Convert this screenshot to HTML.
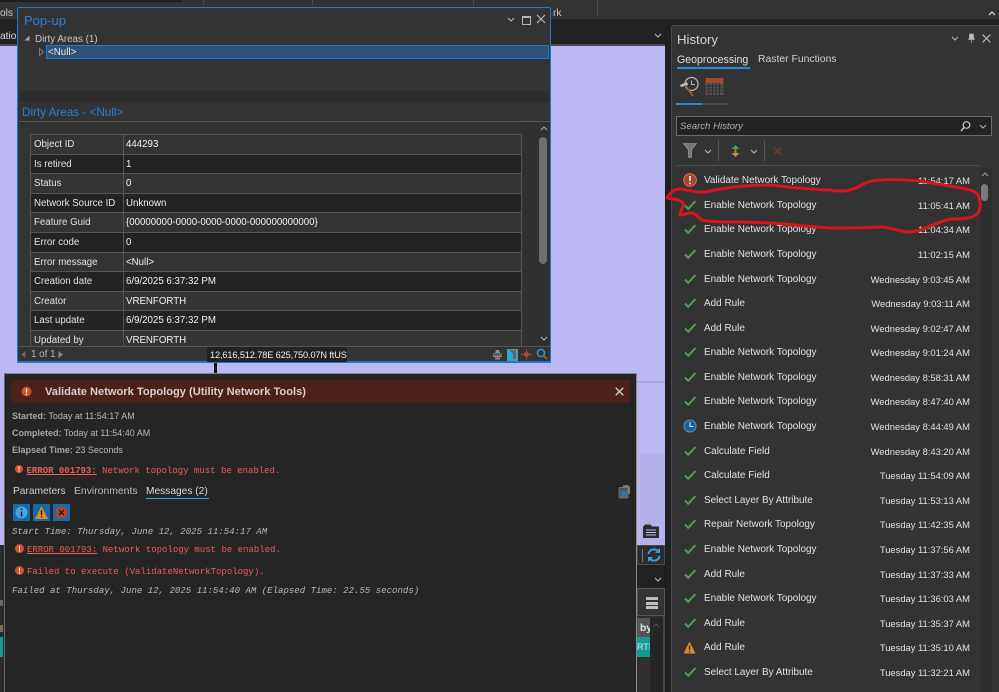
<!DOCTYPE html>
<html><head><meta charset="utf-8"><style>
html,body{margin:0;padding:0;background:#262626}
#p{position:relative;width:999px;height:692px;overflow:hidden;background:#252525;font-family:"Liberation Sans",sans-serif;color:#ddd}
.a{position:absolute}
.t{position:absolute;white-space:nowrap;font-size:10.2px;line-height:12px;color:#dcdcdc}
.n{margin-top:1px;font-size:9.95px;color:#e2e2e2}
.m{font-family:"Liberation Mono",monospace;font-size:9px;color:#ea5f56;margin-top:1px}
.i{font-family:"Liberation Mono",monospace;font-size:9.05px;font-style:italic;color:#b8b8b8;margin-top:1px}
.c{position:absolute;left:0;width:492px;height:19.6px;box-sizing:border-box;border-bottom:1px solid #555;font-size:9.7px;line-height:20px;color:#e2e2e2;white-space:nowrap}
.c span{position:absolute;left:3px}.c b{position:absolute;left:95px;font-weight:normal;color:#f2f2f2}
.c i{position:absolute;left:92px;top:0;bottom:0;width:1px;background:#555}
.o{background:#343434}.e{background:#232323}
.s{position:absolute;color:#b9b9b9;font-size:9px;line-height:11px;white-space:nowrap}
.s b{color:#a5a5a5}
.r{position:absolute;right:29px;margin-top:.5px;white-space:nowrap;font-size:9.4px;line-height:12px;color:#e2e2e2}
.k{margin-top:-.5px}
svg{position:absolute;overflow:visible}
</style></head><body><div id="p">
<svg width="0" height="0"><defs>
<symbol id="ok" viewBox="0 0 14 12"><path d="M2 6.500L5.200 9.800L12.500 2" fill="none" stroke="#4f9e4f" stroke-width="2"/></symbol>
<symbol id="ch" viewBox="0 0 8 5"><path d="M1 1L4 4L7 1" fill="none" stroke="#b5b5b5" stroke-width="1.100"/></symbol>
</defs></svg>

<!-- top strip -->
<div class="a" style="left:0;top:0;width:999px;height:19px;background:#333"></div>
<div class="a" style="left:0;top:0;width:183px;height:2px;background:#1d1d1d"></div>
<div class="a" style="left:203px;top:0;width:1px;height:5px;background:#4c4c4c"></div>
<div class="a" style="left:312px;top:0;width:1px;height:5px;background:#4c4c4c"></div>
<div class="a" style="left:473px;top:0;width:1px;height:6px;background:#4c4c4c"></div>
<div class="a" style="left:597px;top:0;width:1px;height:16px;background:#4c4c4c"></div>
<div class="a" style="left:0;top:19px;width:999px;height:25px;background:#232323"></div>
<div class="a" style="left:0;top:44px;width:665px;height:2px;background:#4a4a4a"></div>
<div class="t" style="left:0;top:8px;color:#c8c8c8">ols</div>
<div class="t" style="left:0;top:31px;color:#d8d8d8">atio</div>
<div class="t" style="left:553px;top:8px;color:#c8c8c8">rk</div>
<svg style="left:654px;top:33px" width="8" height="5"><use href="#ch"/></svg>
<svg style="left:988px;top:11px" width="8" height="5"><path d="M1 4L4 1L7 4" fill="none" stroke="#e0e0e0" stroke-width="1.200"/></svg>

<!-- map -->
<div class="a" style="left:0;top:46px;width:665px;height:499px;background:#bcb8f4"></div>
<div class="a" style="left:640px;top:453px;width:25px;height:92px;background:#b4b0ea"></div>
<div class="a" style="left:637px;top:381px;width:28px;height:2px;background:#a9a6d6"></div>
<div class="a" style="left:214px;top:363px;width:3px;height:10px;background:#111"></div>
<div class="a" style="left:0;top:545px;width:4px;height:147px;background:#2a2a2a"></div>
<div class="a" style="left:0;top:600px;width:3px;height:6px;background:#5a6a78"></div>
<div class="a" style="left:0;top:625px;width:3px;height:7px;background:#7a6a58"></div>
<div class="a" style="left:0;top:637px;width:3px;height:20px;background:#129b97"></div>

<!-- lower right of map -->
<div class="a" style="left:637px;top:545px;width:28px;height:147px;background:#222"></div>
<div class="a" style="left:637px;top:545px;width:28px;height:20px;background:#2c2c2c;border:1px solid #4c4c4c;box-sizing:border-box"></div>
<div class="a" style="left:642px;top:549px;width:1px;height:13px;background:#777"></div>
<svg style="left:647px;top:547px" width="14" height="16" viewBox="0 0 14 16"><path d="M1.500 7A5.500 5 0 0 1 11 4M12.500 9A5.500 5 0 0 1 3 12" fill="none" stroke="#38a0ea" stroke-width="2"/><path d="M13 1v5h-5zM1 15v-5h5z" fill="#38a0ea"/></svg>
<svg style="left:654px;top:577px" width="8" height="5"><use href="#ch"/></svg>
<div class="a" style="left:637px;top:588px;width:28px;height:104px;background:#2f2f2f;border-right:2px solid #454545;box-sizing:border-box"></div>
<div class="a" style="left:637px;top:588px;width:28px;height:28px;border:1px solid #575757;background:#343434;box-sizing:border-box"></div>
<div class="a" style="left:646px;top:597px;width:12px;height:3px;background:#bdbdbd"></div>
<div class="a" style="left:646px;top:602px;width:12px;height:3px;background:#bdbdbd"></div>
<div class="a" style="left:646px;top:606px;width:12px;height:3px;background:#bdbdbd"></div>
<div class="a" style="left:637px;top:618px;width:13px;height:19px;background:#555"></div>
<div class="t" style="left:640px;top:623px;font-weight:bold;color:#e8e8e8">by</div>
<div class="a" style="left:637px;top:637px;width:13px;height:20px;background:#129b97"></div>
<div class="t" style="left:637px;top:641px;color:#cfe8e8;font-size:9px;width:13px;overflow:hidden">RTH</div>
<div class="a" style="left:650px;top:618px;width:13px;height:74px;background:#262626"></div>
<svg style="left:652px;top:623px" width="8" height="5"><path d="M1 4L4 1L7 4" fill="none" stroke="#555" stroke-width="1"/></svg>
<svg style="left:642px;top:523px" width="18" height="16" viewBox="0 0 18 16"><path d="M1 5V15H17V3.500H10L8.500 1.500H3L1 4z" fill="#2c2c2c"/><path d="M4 7H14M4 9.500H14M4 12H14" stroke="#bcb8f4" stroke-width="1"/></svg>

<!-- popup -->
<div class="a" style="left:17px;top:7px;width:534px;height:356px;background:#333;border:1px solid #1f78c8;box-sizing:border-box;border-radius:2px 2px 0 0"></div>
<div class="t" style="left:24px;top:13px;font-size:13px;line-height:16px;color:#2b80d2">Pop-up</div>
<svg style="left:507px;top:17px" width="8" height="5"><use href="#ch"/></svg>
<div class="a" style="left:522px;top:16px;width:7px;height:6px;border:1px solid #b5b5b5;border-top-width:2px"></div>
<svg style="left:536px;top:14px" width="10" height="10"><path d="M1 1L9 9M9 1L1 9" stroke="#bcbcbc" stroke-width="1.100"/></svg>
<svg style="left:24px;top:35px" width="6" height="6"><path d="M5.500 .5V5.500H.5z" fill="#a5a5a5"/></svg>
<div class="t" style="left:35px;top:33.5px;font-size:9.8px;color:#c8c8c8">Dirty Areas (1)</div>
<svg style="left:39px;top:48px" width="5" height="8"><path d="M.5 .5L4.500 4L.5 7.500z" fill="none" stroke="#7c7c7c"/></svg>
<div class="a" style="left:46px;top:45px;width:503px;height:14px;background:#2f5378;border:1px solid #1f7ad2;box-sizing:border-box"></div>
<div class="t" style="left:48px;top:47px;font-size:9.8px;color:#e6e6e6">&lt;Null&gt;</div>
<div class="a" style="left:19px;top:91px;width:531px;height:11px;background:#2c2c2c"></div>
<div class="t" style="left:22px;top:106px;font-size:11.7px;line-height:14px;color:#2b80d2">Dirty Areas - &lt;Null&gt;</div>
<div class="a" style="left:19px;top:121px;width:531px;height:1px;background:#555"></div>

<div class="a" style="left:30px;top:134px;width:492px;height:213px;overflow:hidden;border-top:1px solid #555;border-left:1px solid #555;border-right:1px solid #555;box-sizing:border-box">
<div class="c o" style="top:0"><span>Object ID</span><i></i><b>444293</b></div>
<div class="c e" style="top:19.6px"><span>Is retired</span><i></i><b>1</b></div>
<div class="c o" style="top:39.2px"><span>Status</span><i></i><b>0</b></div>
<div class="c e" style="top:58.8px"><span>Network Source ID</span><i></i><b>Unknown</b></div>
<div class="c o" style="top:78.4px"><span>Feature Guid</span><i></i><b>{00000000-0000-0000-0000-000000000000}</b></div>
<div class="c e" style="top:98px"><span>Error code</span><i></i><b>0</b></div>
<div class="c o" style="top:117.6px"><span>Error message</span><i></i><b>&lt;Null&gt;</b></div>
<div class="c e" style="top:137.2px"><span>Creation date</span><i></i><b>6/9/2025 6:37:32 PM</b></div>
<div class="c o" style="top:156.8px"><span>Creator</span><i></i><b>VRENFORTH</b></div>
<div class="c e" style="top:176.4px"><span>Last update</span><i></i><b>6/9/2025 6:37:32 PM</b></div>
<div class="c o" style="top:196px"><span>Updated by</span><i></i><b>VRENFORTH</b></div>
</div>
<div class="a" style="left:522px;top:122px;width:28px;height:225px;background:#303030"></div>
<div class="a" style="left:539px;top:137px;width:8px;height:127px;background:#6e6e6e;border-radius:4px"></div>
<svg style="left:540px;top:126px" width="8" height="5"><path d="M1 4L4 1L7 4" fill="none" stroke="#aaa" stroke-width="1"/></svg>
<svg style="left:540px;top:336px" width="8" height="5"><use href="#ch"/></svg>
<div class="a" style="left:18px;top:346px;width:532px;height:15px;background:#333;border-top:1px solid #555;box-sizing:border-box"></div>
<div class="a" style="left:18px;top:361px;width:533px;height:2px;background:#1f78c8"></div>
<svg style="left:21px;top:351px" width="5" height="7"><path d="M4.500 0V7L0 3.500z" fill="#666"/></svg>
<div class="t" style="left:31px;top:349px;font-size:9.8px;color:#b5b5b5">1 of 1</div>
<svg style="left:58px;top:351px" width="5" height="7"><path d="M.5 0V7L5 3.500z" fill="#888"/></svg>
<div class="a" style="left:207px;top:347px;width:140px;height:15px;background:#222"></div>
<div class="t" style="left:210px;top:349px;font-size:9.2px;letter-spacing:-.12px;color:#f0f0f0">12,616,512.78E 625,750.07N ftUS</div>
<svg style="left:492px;top:349px" width="11" height="11" viewBox="0 0 11 11"><path d="M3 4L4 1H7L8 4zM1 4.500H10V8H1zM3 8.500H8V10.500H3z" fill="#8d8d8d"/><path d="M1 6H10" stroke="#333"/></svg>
<div class="a" style="left:507px;top:349px;width:9px;height:10px;background:#14b3ee;border:1px solid #888"></div>
<svg style="left:507px;top:349px" width="10" height="11"><path d="M2 1L6 5V10H9V1z" fill="#666"/></svg>
<svg style="left:521px;top:349px" width="11" height="11"><circle cx="5.500" cy="5.500" r="2.500" fill="#a0523a"/><path d="M5.500 0V11M0 5.500H11" stroke="#a84c30"/></svg>
<svg style="left:536px;top:348px" width="12" height="12"><circle cx="5" cy="5" r="3.600" fill="none" stroke="#2f8fdc" stroke-width="1.500"/><path d="M8 8L11 11" stroke="#a8692c" stroke-width="1.500"/></svg>

<!-- dialog -->
<div class="a" style="left:4px;top:373px;width:633px;height:319px;background:#252525;border-top:1px solid #8a8a8a;border-right:1px solid #8a8a8a;border-left:1px solid #666;box-sizing:border-box"></div>
<div class="a" style="left:11px;top:380px;width:619px;height:23px;background:#4d2117"></div>
<svg style="left:21px;top:386px" width="11" height="11"><circle cx="5.500" cy="5.500" r="5" fill="#c9502a"/><path d="M5.500 2.500V6.500M5.500 7.700V9" stroke="#fff" stroke-width="1.300"/></svg>
<div class="t" style="left:45px;top:385px;font-size:11.1px;line-height:14px;font-weight:bold;color:#d8d0cc">Validate Network Topology (Utility Network Tools)</div>
<svg style="left:615px;top:387px" width="9" height="9"><path d="M.7 .7L8.300 8.300M8.300 .7L.7 8.300" stroke="#d0c8c4" stroke-width="1.400"/></svg>
<div class="s" style="left:12px;top:411px"><b>Started:</b> Today at 11:54:17 AM</div>
<div class="s" style="left:12px;top:428px"><b>Completed:</b> Today at 11:54:40 AM</div>
<div class="s" style="left:12px;top:445px"><b>Elapsed Time:</b> 23 Seconds</div>
<svg style="left:15px;top:465px" width="8" height="8"><circle cx="4" cy="4" r="4" fill="#d4522e"/><path d="M4 1.500V4.800M4 5.500V6.700" stroke="#fff"/></svg>
<div class="t m" style="left:26.5px;top:463.500px"><u style="font-weight:bold">ERROR 001793:</u> Network topology must be enabled.</div>
<div class="t" style="left:13px;top:486px;color:#cfcfcf">Parameters</div>
<div class="t" style="left:74px;top:486px;font-size:10.4px;color:#bdbdbd">Environments</div>
<div class="t" style="left:146px;top:486px;color:#d8d8d8">Messages (2)</div>
<div class="a" style="left:146px;top:498px;width:63px;height:1px;background:#36a0e8"></div>
<svg style="left:618px;top:484px" width="13" height="15" viewBox="0 0 13 15"><path d="M5 1H10L12 3V10H10V4H5z" fill="#777"/><rect x="1" y="3.500" width="9" height="10.500" rx="1" fill="#555" stroke="#888" stroke-width=".7"/><rect x="3" y="7" width="6" height="6" fill="#2f74ad"/></svg>
<div class="a" style="left:13px;top:504px;width:17px;height:17px;background:#1769aa"></div>
<div class="a" style="left:33px;top:504px;width:17px;height:17px;background:#1769aa"></div>
<div class="a" style="left:53px;top:504px;width:17px;height:17px;background:#1769aa"></div>
<svg style="left:15px;top:506px" width="13" height="13"><circle cx="6.500" cy="6.500" r="6" fill="#4aa3dc"/><path d="M6.500 5.500V10.500M6.500 2.500V4" stroke="#123" stroke-width="1.500"/></svg>
<svg style="left:34px;top:505px" width="15" height="15"><path d="M7.500 1L14 14H1z" fill="#df8c2a"/><path d="M7.500 5V10M7.500 11V12.500" stroke="#222" stroke-width="1.300"/></svg>
<svg style="left:55px;top:506px" width="13" height="13"><circle cx="6.500" cy="6.500" r="6" fill="#b4492a"/><path d="M4 4L9 9M9 4L4 9" stroke="#2a1a16" stroke-width="1.400"/></svg>
<div class="t i" style="left:12px;top:525px">Start Time: Thursday, June 12, 2025 11:54:17 AM</div>
<svg style="left:15px;top:544px" width="9" height="9"><circle cx="4.500" cy="4.500" r="4.500" fill="#d4522e"/><path d="M4.500 2V5.300M4.500 6V7.500" stroke="#fff"/></svg>
<div class="t m" style="left:27px;top:543px"><u>ERROR 001793:</u> Network topology must be enabled.</div>
<svg style="left:15px;top:566px" width="9" height="9"><circle cx="4.500" cy="4.500" r="4.500" fill="#d4522e"/><path d="M4.500 2V5.300M4.500 6V7.500" stroke="#fff"/></svg>
<div class="t m" style="left:27px;top:565px">Failed to execute (ValidateNetworkTopology).</div>
<div class="t i" style="left:12px;top:584px">Failed at Thursday, June 12, 2025 11:54:40 AM (Elapsed Time: 22.55 seconds)</div>

<!-- history -->
<div class="a" style="left:665px;top:25px;width:7px;height:667px;background:#202020"></div>
<div class="a" style="left:671px;top:25px;width:328px;height:667px;background:#333;border:1px solid #4b4b4b;border-right:0;border-bottom:0;border-radius:3px 0 0 0;box-sizing:border-box"></div>
<div class="t" style="left:677px;top:32px;font-size:13.2px;line-height:16px;color:#d5d5d5">History</div>
<svg style="left:951px;top:36px" width="8" height="5"><use href="#ch"/></svg>
<svg style="left:968px;top:34px" width="7" height="9"><path d="M1.500 0H5.500V4L6.500 5.500H.5L1.500 4zM3.500 5.500V9" fill="#bbb" stroke="#bbb" stroke-width=".6"/></svg>
<svg style="left:982px;top:34px" width="9" height="9"><path d="M.7 .7L8.300 8.300M8.300 .7L.7 8.300" stroke="#bcbcbc" stroke-width="1.100"/></svg>
<div class="t" style="left:677px;top:54px;font-size:10.6px;color:#e0e0e0">Geoprocessing</div>
<div class="t" style="left:758px;top:54px;font-size:10.4px;color:#d0d0d0">Raster Functions</div>
<div class="a" style="left:677px;top:67px;width:73px;height:2px;background:#2b87d8"></div>
<svg style="left:678px;top:76px" width="22" height="22" viewBox="0 0 22 22"><circle cx="13.500" cy="8" r="6.500" fill="none" stroke="#b8b8b8" stroke-width="1.200"/><path d="M13.500 4.500V8.500H17" fill="none" stroke="#b8b8b8"/><path d="M2 9L9 6L10 9L3 11z" fill="#c8c8c8"/><path d="M7 9L15 20" stroke="#9a6a3c" stroke-width="1.600"/></svg>
<svg style="left:705px;top:77px" width="19" height="19" viewBox="0 0 19 19"><rect x=".5" y="1" width="18" height="17" fill="#555"/><rect x=".5" y="1" width="18" height="5" fill="#a34a2c"/><path d="M1 9H18M1 12H18M1 15H18M4 6V18M7.500 6V18M11 6V18M14.500 6V18" stroke="#2f2f2f" stroke-width="1"/></svg>
<div class="a" style="left:676px;top:103px;width:52px;height:2px;background:#4a4a4a"></div>
<div class="a" style="left:676px;top:103px;width:26px;height:2px;background:#2b87d8"></div>
<div class="a" style="left:676px;top:116px;width:316px;height:20px;background:#222;border:1px solid #6c6c6c;box-sizing:border-box"></div>
<div class="t" style="left:680px;top:120px;margin-top:1px;font-size:9.6px;font-style:italic;color:#b0b0b0">Search History</div>
<svg style="left:960px;top:121px" width="11" height="11"><circle cx="6.500" cy="4" r="3.300" fill="none" stroke="#c5c5c5" stroke-width="1.200"/><path d="M4 6.500L1 10" stroke="#c5c5c5" stroke-width="1.400"/></svg>
<svg style="left:979px;top:124px" width="8" height="5"><use href="#ch"/></svg>
<svg style="left:683px;top:143px" width="14" height="15"><path d="M.5 .5H13.500L8.500 7V14.500H5.500V7z" fill="#777" stroke="#aaa" stroke-width=".6"/></svg>
<svg style="left:704px;top:149px" width="8" height="5"><use href="#ch"/></svg>
<div class="a" style="left:718px;top:140px;width:1px;height:21px;background:#555"></div>
<svg style="left:730px;top:144px" width="11" height="14"><path d="M5.500 1L1.500 5H4.500V7H6.500V5H9.500z" fill="#4f9e4f"/><path d="M5.500 13L1.500 9H4.500V7H6.500V9H9.500z" fill="#d98a2a"/></svg>
<svg style="left:750px;top:149px" width="8" height="5"><use href="#ch"/></svg>
<div class="a" style="left:764px;top:140px;width:1px;height:21px;background:#555"></div>
<svg style="left:773px;top:147px" width="9" height="8"><path d="M.7 .5L8.300 7.500M8.300 .5L.7 7.500" stroke="#6e3a2c" stroke-width="1.600"/></svg>
<div class="a" style="left:676px;top:165px;width:304px;height:1px;background:#4d4d4d"></div>
<div class="a" style="left:980px;top:168px;width:12px;height:524px;background:#2e2e2e"></div>
<div class="a" style="left:981px;top:184px;width:7px;height:17px;background:#7a7a7a;border-radius:4px"></div>
<svg style="left:981px;top:172px" width="8" height="5"><path d="M1 4L4 1L7 4" fill="none" stroke="#999" stroke-width="1"/></svg>

<svg style="left:683px;top:173px" width="14" height="14"><circle cx="7" cy="7" r="6.300" fill="#a8402a" stroke="#d97a55" stroke-width="1"/><path d="M7 3V8M7 9.500V11.200" stroke="#fff" stroke-width="1.500"/></svg>
<div class="t n" style="left:704px;top:174px">Validate Network Topology</div><div class="r" style="top:174px">11:54:17 AM</div>
<svg class="k" style="left:683px;top:199px" width="14" height="12"><use href="#ok"/></svg>
<div class="t n" style="left:704px;top:199px">Enable Network Topology</div><div class="r" style="top:199px">11:05:41 AM</div>
<svg class="k" style="left:683px;top:223px" width="14" height="12"><use href="#ok"/></svg>
<div class="t n" style="left:704px;top:223px">Enable Network Topology</div><div class="r" style="top:223px">11:04:34 AM</div>
<svg class="k" style="left:683px;top:248px" width="14" height="12"><use href="#ok"/></svg>
<div class="t n" style="left:704px;top:248px">Enable Network Topology</div><div class="r" style="top:248px">11:02:15 AM</div>
<svg class="k" style="left:683px;top:273px" width="14" height="12"><use href="#ok"/></svg>
<div class="t n" style="left:704px;top:273px">Enable Network Topology</div><div class="r" style="top:273px">Wednesday 9:03:45 AM</div>
<svg class="k" style="left:683px;top:297px" width="14" height="12"><use href="#ok"/></svg>
<div class="t n" style="left:704px;top:297px">Add Rule</div><div class="r" style="top:297px">Wednesday 9:03:11 AM</div>
<svg class="k" style="left:683px;top:322px" width="14" height="12"><use href="#ok"/></svg>
<div class="t n" style="left:704px;top:322px">Add Rule</div><div class="r" style="top:322px">Wednesday 9:02:47 AM</div>
<svg class="k" style="left:683px;top:346px" width="14" height="12"><use href="#ok"/></svg>
<div class="t n" style="left:704px;top:346px">Enable Network Topology</div><div class="r" style="top:346px">Wednesday 9:01:24 AM</div>
<svg class="k" style="left:683px;top:371px" width="14" height="12"><use href="#ok"/></svg>
<div class="t n" style="left:704px;top:371px">Enable Network Topology</div><div class="r" style="top:371px">Wednesday 8:58:31 AM</div>
<svg class="k" style="left:683px;top:395px" width="14" height="12"><use href="#ok"/></svg>
<div class="t n" style="left:704px;top:395px">Enable Network Topology</div><div class="r" style="top:395px">Wednesday 8:47:40 AM</div>
<svg style="left:683px;top:419px" width="14" height="14"><circle cx="7" cy="7" r="6" fill="#1f5f96" stroke="#4b9bd8"/><path d="M7 3V7.500H10.500" fill="none" stroke="#e0e0e0"/></svg>
<div class="t n" style="left:704px;top:420px">Enable Network Topology</div><div class="r" style="top:420px">Wednesday 8:44:49 AM</div>
<svg class="k" style="left:683px;top:445px" width="14" height="12"><use href="#ok"/></svg>
<div class="t n" style="left:704px;top:445px">Calculate Field</div><div class="r" style="top:445px">Wednesday 8:43:20 AM</div>
<svg class="k" style="left:683px;top:469px" width="14" height="12"><use href="#ok"/></svg>
<div class="t n" style="left:704px;top:469px">Calculate Field</div><div class="r" style="top:469px">Tuesday 11:54:09 AM</div>
<svg class="k" style="left:683px;top:494px" width="14" height="12"><use href="#ok"/></svg>
<div class="t n" style="left:704px;top:494px">Select Layer By Attribute</div><div class="r" style="top:494px">Tuesday 11:53:13 AM</div>
<svg class="k" style="left:683px;top:518px" width="14" height="12"><use href="#ok"/></svg>
<div class="t n" style="left:704px;top:518px">Repair Network Topology</div><div class="r" style="top:518px">Tuesday 11:42:35 AM</div>
<svg class="k" style="left:683px;top:543px" width="14" height="12"><use href="#ok"/></svg>
<div class="t n" style="left:704px;top:543px">Enable Network Topology</div><div class="r" style="top:543px">Tuesday 11:37:56 AM</div>
<svg class="k" style="left:683px;top:568px" width="14" height="12"><use href="#ok"/></svg>
<div class="t n" style="left:704px;top:568px">Add Rule</div><div class="r" style="top:568px">Tuesday 11:37:33 AM</div>
<svg class="k" style="left:683px;top:592px" width="14" height="12"><use href="#ok"/></svg>
<div class="t n" style="left:704px;top:592px">Enable Network Topology</div><div class="r" style="top:592px">Tuesday 11:36:03 AM</div>
<svg class="k" style="left:683px;top:617px" width="14" height="12"><use href="#ok"/></svg>
<div class="t n" style="left:704px;top:617px">Add Rule</div><div class="r" style="top:617px">Tuesday 11:35:37 AM</div>
<svg style="left:683px;top:641px" width="13" height="13"><path d="M6.500 .5L12.500 12.500H.5z" fill="#d98a2a"/><path d="M6.500 4.500V9M6.500 10V11.500" stroke="#2a2a2a" stroke-width="1.300"/></svg>
<div class="t n" style="left:704px;top:641px">Add Rule</div><div class="r" style="top:641px">Tuesday 11:35:10 AM</div>
<svg class="k" style="left:683px;top:666px" width="14" height="12"><use href="#ok"/></svg>
<div class="t n" style="left:704px;top:666px">Select Layer By Attribute</div><div class="r" style="top:666px">Tuesday 11:32:21 AM</div>

<!-- red scribble -->
<svg style="left:0;top:0" width="999" height="692" viewBox="0 0 999 692"><path d="M667 198C670 192 675 189 680 189C690 190 697 193 705 192C715 190 725 188 735 187C745 186 755 185 765 185C780 185 790 188 800 188C812 189 820 190 830 190C842 192 850 191 858 187C866 182 872 180 882 180C895 179 908 180 920 181C932 183 942 185 950 186C960 188 970 189 975 192C981 196 982 209 977 214C972 219 960 219 950 219C942 221 936 224 930 226C922 230 916 232 908 232C898 231 890 227 880 227C865 228 850 228 830 228C810 227 790 224 770 223C755 222 745 222 730 222C720 222 708 222 702 220C697 217 696 213 691 213C687 213 684 215 680 215C680 210 685 206 683 203C680 199 672 199 667 198Z" fill="none" stroke="#d8141c" stroke-width="3" stroke-linejoin="round"/></svg>
</div></body></html>
